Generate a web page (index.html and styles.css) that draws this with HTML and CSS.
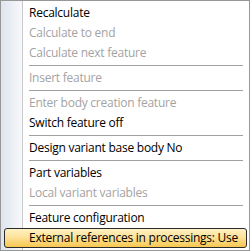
FILE: index.html
```html
<!DOCTYPE html>
<html lang="en">
<head>
    <meta charset="UTF-8">
    <title>Context menu</title>
    <link rel="stylesheet" href="styles.css">
</head>
<body>
    <div class="menu">
        <div class="item">Recalculate</div>
        <div class="item disabled">Calculate to end</div>
        <div class="item disabled">Calculate next feature</div>
        <div class="sep"></div>
        <div class="item disabled">Insert feature</div>
        <div class="sep"></div>
        <div class="item disabled">Enter body creation feature</div>
        <div class="item">Switch feature off</div>
        <div class="sep"></div>
        <div class="item">Design variant base body No</div>
        <div class="sep"></div>
        <div class="item">Part variables</div>
        <div class="item disabled">Local variant variables</div>
        <div class="sep"></div>
        <div class="item">Feature configuration</div>
        <div class="item active">External references in processings: Use</div>
    </div>
</body>
</html>
```
FILE: styles.css
```css
body {
    margin: 0;
    background: #fff;
}
.menu {
    box-sizing: border-box;
    width: 250px;
    height: 251px;
    padding: 2px 1px;
    border: 1px solid #979797;
    background: linear-gradient(to right, #dfe5ee 0, #f7f8fb 21px, #c9c9c9 21px, #c9c9c9 22px, #fff 22px);
    font-family: "Open Sans", sans-serif;
    font-size: 12px;
    letter-spacing: -0.25px;
    color: #000;
}
.item {
    height: 20px;
    line-height: 20px;
    padding-left: 27px;
    white-space: nowrap;
}
.item.disabled {
    color: #a3a3a3;
}
.item.active {
    box-sizing: border-box;
    margin: 0 1px 0 2px;
    padding-left: 24px;
    border: 1px solid #2b2b2b;
    border-radius: 3px;
    line-height: 18px;
    background: linear-gradient(to bottom, #fef1c2 0%, #fde29a 45%, #f8c750 100%);
}
.sep {
    height: 5px;
    margin: 0 5px 0 27px;
    background: linear-gradient(to bottom, transparent 2px, #a0a0a0 2px, #a0a0a0 3px, transparent 3px);
}
```
